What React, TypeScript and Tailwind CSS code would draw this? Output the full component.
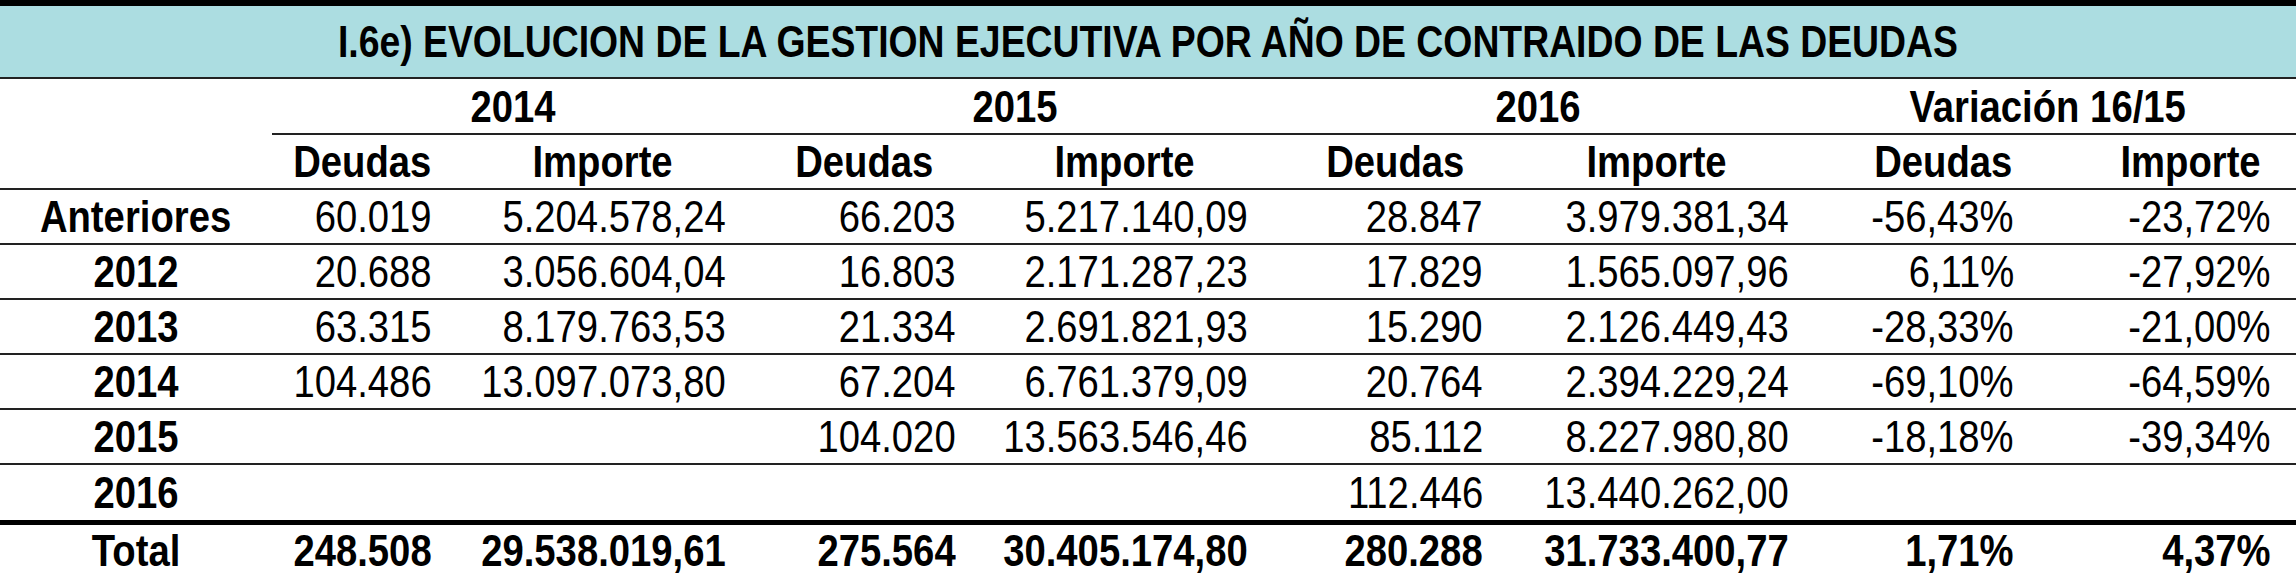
import React from "react";

const font = { fontFamily: '"Liberation Sans Narrow", "Arial Narrow", "Liberation Sans", sans-serif' };

type Row = { label: string; vals: string[]; total?: boolean };

const rows: Row[] = [
  { label: "Anteriores", vals: ["60.019", "5.204.578,24", "66.203", "5.217.140,09", "28.847", "3.979.381,34", "-56,43%", "-23,72%"] },
  { label: "2012", vals: ["20.688", "3.056.604,04", "16.803", "2.171.287,23", "17.829", "1.565.097,96", "6,11%", "-27,92%"] },
  { label: "2013", vals: ["63.315", "8.179.763,53", "21.334", "2.691.821,93", "15.290", "2.126.449,43", "-28,33%", "-21,00%"] },
  { label: "2014", vals: ["104.486", "13.097.073,80", "67.204", "6.761.379,09", "20.764", "2.394.229,24", "-69,10%", "-64,59%"] },
  { label: "2015", vals: ["", "", "104.020", "13.563.546,46", "85.112", "8.227.980,80", "-18,18%", "-39,34%"] },
  { label: "2016", vals: ["", "", "", "", "112.446", "13.440.262,00", "", ""] },
];

const total: Row = { label: "Total", vals: ["248.508", "29.538.019,61", "275.564", "30.405.174,80", "280.288", "31.733.400,77", "1,71%", "4,37%"], total: true };

const cols = "grid-cols-[272px_180px_302px_220px_302px_238px_286px_286px_210px]";
const pads = ["pr-[20px]", "pr-[28px]", "pr-[18px]", "pr-[28px]", "pr-[31px]", "pr-[11px]", "pr-[72px]", "pr-[25px]"];

function C({ children }: { children: React.ReactNode }) {
  return <span className="inline-block whitespace-nowrap scale-x-[0.85] origin-center">{children}</span>;
}
function R({ children }: { children: React.ReactNode }) {
  return <span className="inline-block whitespace-nowrap scale-x-[0.85] origin-right">{children}</span>;
}

function DataRow({ r, last }: { r: Row; last?: boolean }) {
  return (
    <div className={`grid ${cols} ${r.total ? "h-[50px]" : last ? "h-[55px]" : "h-[55px] border-b-2 border-[#222]"}`}>
      <div className="flex items-center justify-center font-bold text-[45px] leading-none">
        <C>{r.label}</C>
      </div>
      {r.vals.map((v, i) => (
        <div key={i} className={`flex items-center justify-end text-[45px] leading-none ${pads[i]} ${r.total ? "font-bold" : ""}`}>
          {v && <R>{v}</R>}
        </div>
      ))}
    </div>
  );
}

export default function App() {
  const groups = ["2014", "2015", "2016", "Variación 16/15"];
  return (
    <div className="w-[2296px] h-[575px] bg-white text-black overflow-hidden" style={font}>
      <div className="h-[6px] bg-black" />
      <div className="h-[73px] bg-[#acdde1] border-b-2 border-[#222] flex items-center justify-center">
        <span className="inline-block whitespace-nowrap scale-x-[0.83] origin-center font-bold text-[45px] leading-none">
          I.6e) EVOLUCION DE LA GESTION EJECUTIVA POR AÑO DE CONTRAIDO DE LAS DEUDAS
        </span>
      </div>
      <div className="flex h-[56px]">
        <div className="w-[272px]" />
        <div className="flex-1 grid grid-cols-[482px_522px_524px_496px] border-b-2 border-[#222]">
          {groups.map((g) => (
            <div key={g} className="flex items-center justify-center font-bold text-[45px] leading-none">
              <C>{g}</C>
            </div>
          ))}
        </div>
      </div>
      <div className={`grid ${cols} h-[55px] border-b-2 border-[#222]`}>
        <div />
        {["Deudas", "Importe", "Deudas", "Importe", "Deudas", "Importe", "Deudas", "Importe"].map((h, i) => (
          <div key={i} className="flex items-center justify-center font-bold text-[45px] leading-none">
            <C>{h}</C>
          </div>
        ))}
      </div>
      {rows.map((r, i) => (
        <DataRow key={r.label} r={r} last={i === rows.length - 1} />
      ))}
      <div className="h-[5px] bg-black" />
      <DataRow r={total} />
    </div>
  );
}
